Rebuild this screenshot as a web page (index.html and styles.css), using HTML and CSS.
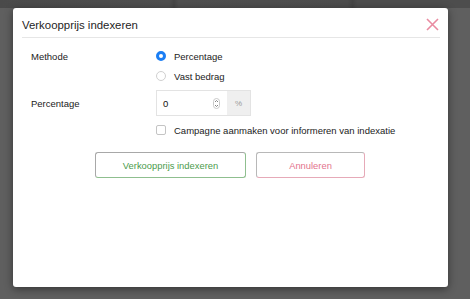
FILE: index.html
```html
<!DOCTYPE html>
<html lang="nl">
<head>
    <meta charset="UTF-8">
    <meta name="viewport" content="width=device-width, initial-scale=1.0">
    <title>Verkoopprijs indexeren</title>
    <link rel="stylesheet" href="styles.css">
</head>
<body>
    <div class="backdrop-strip"></div>

    <div class="dialog">
        <div class="dialog-header">
            <h2>Verkoopprijs indexeren</h2>
            <button class="close-button" aria-label="Sluiten">
                <svg width="13" height="13" viewBox="0 0 13 13">
                    <path d="M1 1 L12 12 M12 1 L1 12" stroke="#e98ba1" stroke-width="1.6" fill="none"/>
                </svg>
            </button>
        </div>

        <div class="dialog-body">
            <div class="form-row">
                <span class="form-label">Methode</span>
                <div class="form-field">
                    <label class="radio-option">
                        <span class="radio checked"></span>
                        Percentage
                    </label>
                </div>
            </div>
            <div class="form-row">
                <span class="form-label"></span>
                <div class="form-field">
                    <label class="radio-option">
                        <span class="radio"></span>
                        Vast bedrag
                    </label>
                </div>
            </div>
            <div class="form-row input-row">
                <span class="form-label">Percentage</span>
                <div class="form-field">
                    <div class="input-group">
                        <div class="number-input">
                            <span class="number-value">0</span>
                            <svg class="spinner" width="7" height="11" viewBox="0 0 7 11">
                                <rect x="0.5" y="0.5" width="6" height="10" rx="3" fill="none" stroke="#c8c8c8"/>
                                <path d="M2 4 L3.5 2.5 L5 4 M2 7 L3.5 8.5 L5 7" stroke="#777" stroke-width="0.9" fill="none"/>
                            </svg>
                        </div>
                        <span class="addon">%</span>
                    </div>
                </div>
            </div>
            <div class="form-row">
                <span class="form-label"></span>
                <div class="form-field">
                    <label class="checkbox-option">
                        <span class="checkbox"></span>
                        Campagne aanmaken voor informeren van indexatie
                    </label>
                </div>
            </div>

            <div class="button-row">
                <button class="btn btn-confirm">Verkoopprijs indexeren</button>
                <button class="btn btn-cancel">Annuleren</button>
            </div>
        </div>
    </div>
</body>
</html>
```

FILE: styles.css
```css
* {
    margin: 0;
    padding: 0;
    box-sizing: border-box;
}

body {
    font-family: "Liberation Sans", Arial, sans-serif;
    background: #5f5f5f;
    height: 100vh;
    overflow: hidden;
    color: #222;
}

/* Blurred page behind the overlay */
.backdrop-strip {
    height: 8px;
    background: linear-gradient(to right, #4a4a4a 0%, #4f4f4f 36%, #454545 37%, #4f4f4f 38%, #4d4d4d 74%, #454545 75%, #4d4d4d 76%);
}

.dialog {
    width: 435px;
    height: 279px;
    margin-left: 13px;
    background: #fff;
    border-radius: 3px;
    box-shadow: 0 2px 8px rgba(0, 0, 0, 0.45);
}

.dialog-header {
    height: 30px;
    margin: 0 8px 0 9px;
    border-bottom: 1px solid #e6e6e6;
    display: flex;
    align-items: center;
    justify-content: space-between;
    padding-top: 4px;
}

.dialog-header h2 {
    font-size: 11.4px;
    font-weight: normal;
    color: #1e1e1e;
}

.close-button {
    border: none;
    background: none;
    width: 13px;
    height: 13px;
    display: flex;
    margin-right: 1px;
    cursor: pointer;
}

.dialog-body {
    padding: 8px 18px 0 18px;
    font-size: 9.5px;
}

.form-row {
    display: grid;
    grid-template-columns: 125px 1fr;
    align-items: center;
    height: 20px;
}

.input-row {
    height: 26px;
    margin: 4px 0 4px;
}

.form-label {
    color: #222;
}

.radio-option,
.checkbox-option {
    display: flex;
    align-items: center;
    gap: 8px;
    color: #222;
}

.radio {
    width: 10px;
    height: 10px;
    border-radius: 50%;
    border: 1px solid #d0d0d0;
    background: #fff;
}

.radio.checked {
    border: 3px solid #1b7ef4;
    background: #fff;
}

.checkbox {
    width: 10px;
    height: 10px;
    border-radius: 2px;
    border: 1px solid #c4c4c4;
    background: #fff;
}

.input-group {
    display: flex;
    width: 95px;
    height: 26px;
    border: 1px solid #e3e3e3;
}

.number-input {
    flex: 1;
    display: flex;
    align-items: center;
    justify-content: space-between;
    padding: 0 7px 0 6px;
}

.number-value {
    color: #111;
}

.addon {
    width: 23px;
    background: #efefef;
    color: #9a9a9a;
    font-size: 8px;
    display: flex;
    align-items: center;
    justify-content: center;
}

.button-row {
    display: flex;
    justify-content: center;
    gap: 10px;
    margin-top: 12px;
    margin-left: -1px;
}

.btn {
    font-family: "Liberation Sans", Arial, sans-serif;
    font-size: 9.4px;
    height: 26px;
    background: #fff;
    border-radius: 3px;
    cursor: pointer;
}

.btn-confirm {
    width: 151px;
    color: #4c9b4c;
    border: 1px solid #8fbf8f;
    border-top-color: #a8a8a8;
    border-left-color: #a8a8a8;
}

.btn-cancel {
    width: 109px;
    color: #e3738d;
    border: 1px solid #e6aab8;
    border-top-color: #b8b8b8;
    border-left-color: #b8b8b8;
}
```
